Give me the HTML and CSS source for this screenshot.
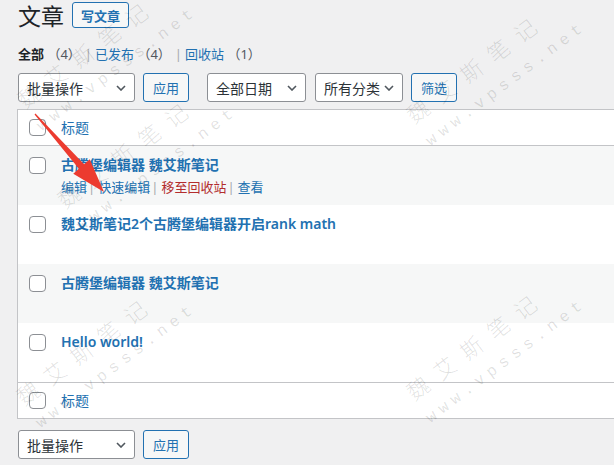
FILE: index.html
```html
<!DOCTYPE html>
<html lang="zh-CN">
<head>
<meta charset="utf-8">
<title>文章</title>
<link rel="stylesheet" href="styles.css">
</head>
<body>
<div class="wrap">
  <div class="page-head">
    <h1 class="page-title">文章</h1>
    <a class="btn-add">写文章</a>
  </div>
  <ul class="subsubsub">
    <li><a class="current">全部 <span class="count">（4）</span></a><span class="bar">|</span></li>
    <li><a>已发布 <span class="count">（4）</span></a><span class="bar">|</span></li>
    <li><a>回收站 <span class="count">（1）</span></a></li>
  </ul>
  <div class="tablenav top">
    <div class="select w-bulk"><span>批量操作</span><svg class="chev" width="10" height="6" viewBox="0 0 10 6"><path d="M1 1 L5 5 L9 1" fill="none" stroke="#50575e" stroke-width="1.6"/></svg></div>
    <button class="btn">应用</button>
    <div class="select w-date"><span>全部日期</span><svg class="chev" width="10" height="6" viewBox="0 0 10 6"><path d="M1 1 L5 5 L9 1" fill="none" stroke="#50575e" stroke-width="1.6"/></svg></div>
    <div class="select w-cat"><span>所有分类</span><svg class="chev" width="10" height="6" viewBox="0 0 10 6"><path d="M1 1 L5 5 L9 1" fill="none" stroke="#50575e" stroke-width="1.6"/></svg></div>
    <button class="btn">筛选</button>
  </div>
  <div class="table">
    <div class="thead">
      <div class="col-check"><span class="cb"></span></div>
      <div class="col-title"><a class="sort">标题</a></div>
    </div>
    <div class="row alt">
      <div class="col-check"><span class="cb"></span></div>
      <div class="col-title">
        <a class="row-title">古腾堡编辑器 魏艾斯笔记</a>
        <div class="row-actions"><a>编辑</a><span class="sep">|</span><a>快速编辑</a><span class="sep">|</span><a class="trash">移至回收站</a><span class="sep">|</span><a>查看</a></div>
      </div>
    </div>
    <div class="row">
      <div class="col-check"><span class="cb"></span></div>
      <div class="col-title"><a class="row-title">魏艾斯笔记2个古腾堡编辑器开启rank math</a></div>
    </div>
    <div class="row alt">
      <div class="col-check"><span class="cb"></span></div>
      <div class="col-title"><a class="row-title">古腾堡编辑器 魏艾斯笔记</a></div>
    </div>
    <div class="row">
      <div class="col-check"><span class="cb"></span></div>
      <div class="col-title"><a class="row-title">Hello world!</a></div>
    </div>
    <div class="tfoot">
      <div class="col-check"><span class="cb"></span></div>
      <div class="col-title"><a class="sort">标题</a></div>
    </div>
  </div>
  <div class="tablenav bottom">
    <div class="select w-bulk"><span>批量操作</span><svg class="chev" width="10" height="6" viewBox="0 0 10 6"><path d="M1 1 L5 5 L9 1" fill="none" stroke="#50575e" stroke-width="1.6"/></svg></div>
    <button class="btn">应用</button>
  </div>
</div>

<div class="wm wm-a"><div class="wm-cn">魏艾斯笔记</div><div class="wm-en">www.vpsss.net</div></div>
<div class="wm wm-b"><div class="wm-cn">魏艾斯笔记</div><div class="wm-en">www.vpsss.net</div></div>
<div class="wm wm-c"><div class="wm-cn">魏艾斯笔记</div><div class="wm-en">www.vpsss.net</div></div>
<div class="wm wm-d"><div class="wm-cn">魏艾斯笔记</div><div class="wm-en">www.vpsss.net</div></div>
<div class="wm wm-e"><div class="wm-cn">魏艾斯笔记</div><div class="wm-en">www.vpsss.net</div></div>

<svg class="overlay" width="614" height="465" viewBox="0 0 614 465">
  <polygon points="34.55,114.4 78.9,168.8 73.25,173.8 104,192 89.75,159.2 84.1,164.2 35.45,113.6" fill="#ec3b2f"/>
</svg>
</body>
</html>
```

FILE: styles.css
```css
* { box-sizing: border-box; margin: 0; padding: 0; }
html, body { width: 614px; height: 465px; overflow: hidden; }
body {
  background: #f0f0f1;
  font-family: "Noto Sans", "Noto Sans CJK SC", sans-serif;
  color: #3c434a;
  font-size: 13px;
  position: relative;
}
a { text-decoration: none; color: #2271b1; }
ul { list-style: none; }

.wrap { padding-left: 18px; }

.page-head { display: flex; align-items: center; height: 30px; }
.page-title {
  font-family: "Noto Sans CJK SC", sans-serif;
  font-size: 23px; font-weight: 400; line-height: 30px; color: #1d2327;
}
.btn-add {
  margin-left: 8px; width: 57px; height: 26px;
  border: 1px solid #2271b1; border-radius: 3px; background: #f6f7f7;
  color: #2271b1; font-size: 13px; font-weight: 600;
  display: flex; align-items: center; justify-content: center;
}

.subsubsub { display: flex; margin-top: 14px; line-height: 20px; font-size: 13px; }
.subsubsub .current { color: #1d2327; font-weight: 600; }
.subsubsub .count { color: #50575e; font-weight: 400; }
.subsubsub .bar { color: #a7aaad; margin: 0 3px 0 4px; }

.tablenav { display: flex; align-items: center; height: 29px; }
.tablenav.top { margin-top: 9px; }
.tablenav.bottom { margin-top: 11px; }
.select {
  height: 29px; display: flex; align-items: center; justify-content: space-between;
  border: 1px solid #8c8f94; border-radius: 3px; background: #fff;
  padding: 0 8px 0 8px; font-size: 14px; color: #2c3338;
}
.w-bulk { width: 117px; margin-right: 8px; }
.w-date { width: 99px; margin-left: 18px; margin-right: 9px; }
.w-cat { width: 88px; margin-right: 8px; }
.chev { flex: none; }
.btn {
  height: 29px; width: 46px; border: 1px solid #2271b1; border-radius: 3px;
  background: #f6f7f7; color: #2271b1; font-size: 13px;
  font-family: "Noto Sans", "Noto Sans CJK SC", sans-serif;
}

.table {
  margin-top: 7px; margin-left: -1px; width: 640px;
  border: 1px solid #c3c4c7; background: #fff;
}
.thead, .tfoot { display: flex; align-items: center; height: 36px; }
.thead { border-bottom: 1px solid #c3c4c7; }
.tfoot { border-top: 1px solid #c3c4c7; }
.row { display: flex; align-items: flex-start; height: 59px; }
.row.alt { background: #f6f7f7; }
.col-check { width: 43px; flex: none; display: flex; padding-left: 11px; }
.row .col-check { padding-top: 11px; }
.row .col-title { padding-top: 9px; }
.cb {
  width: 17px; height: 17px; border: 1px solid #8c8f94; border-radius: 4px; background: #fff;
  display: block;
}
.sort { font-size: 14px; line-height: 20px; }
.row-title { font-size: 14px; font-weight: 600; line-height: 20px; display: block; }
.row-actions { margin-top: 2px; font-size: 13px; line-height: 20px; display: flex; }
.row-actions .sep { color: #a7aaad; margin: 0 3px 0 1px; }
.row-actions .trash { color: #b32d2e; }

.wm {
  position: absolute; transform: rotate(-37deg); transform-origin: 11px 12px;
  color: rgba(0, 0, 0, 0.12); white-space: nowrap; pointer-events: none;
}
.wm-cn {
  font-family: "Noto Sans CJK SC", sans-serif; font-size: 22px; line-height: 24px;
  letter-spacing: 11.5px; font-weight: 300;
}
.wm-en {
  font-family: "Liberation Mono", monospace; font-size: 16px; line-height: 20px;
  letter-spacing: 5.5px; margin-top: 11px;
}
.wm-a { left: 17px; top: 83px; }
.wm-b { left: 57px; top: 183px; }
.wm-c { left: 406px; top: 98px; }
.wm-d { left: 406px; top: 375px; }
.wm-e { left: 16px; top: 380px; }

.overlay { position: absolute; left: 0; top: 0; pointer-events: none; }
```
